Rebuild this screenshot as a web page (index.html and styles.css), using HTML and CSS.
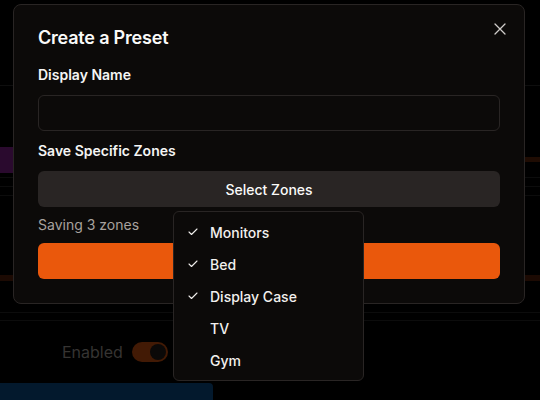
FILE: index.html
```html
<!DOCTYPE html>
<html>
<head>
<meta charset="utf-8">
<link rel="stylesheet" href="styles.css">
</head>
<body>
<div class="page">
  <div class="bg-head"></div>
  <div class="bg-spacer"></div>
  <div class="bg-row-purple">
    <div class="purple"></div>
    <div class="amber-tick"></div>
  </div>
  <div class="bg-line l1"></div>
  <div class="bg-line l2"></div>
  <div class="bg-line l3"></div>
  <div class="bg-gap2"></div>
  <div class="bg-amber-band"></div>
  <div class="bg-line l4"></div>
  <div class="bg-line l5"></div>
  <div class="enabled-row">
    <span class="enabled-label">Enabled</span>
    <span class="toggle"><span class="knob"></span></span>
  </div>
  <div class="blue-bar"></div>
</div>

<div class="modal">
  <button class="close" aria-label="Close">
    <svg width="12" height="12" viewBox="0 0 12 12"><path d="M1 1 11 11M11 1 1 11" stroke="#cfccc9" stroke-width="1.3" stroke-linecap="round" fill="none"/></svg>
  </button>
  <h2 class="title">Create a Preset</h2>
  <div class="label first">Display Name</div>
  <div class="input"></div>
  <div class="label">Save Specific Zones</div>
  <div class="select">
    Select Zones
    <div class="menu">
      <div class="item"><svg class="check" width="12" height="12" viewBox="0 0 24 24"><path d="M20 6 9 17l-5-5" stroke="#f0eeec" stroke-width="2.2" fill="none" stroke-linecap="round" stroke-linejoin="round"/></svg>Monitors</div>
      <div class="item"><svg class="check" width="12" height="12" viewBox="0 0 24 24"><path d="M20 6 9 17l-5-5" stroke="#f0eeec" stroke-width="2.2" fill="none" stroke-linecap="round" stroke-linejoin="round"/></svg>Bed</div>
      <div class="item"><svg class="check" width="12" height="12" viewBox="0 0 24 24"><path d="M20 6 9 17l-5-5" stroke="#f0eeec" stroke-width="2.2" fill="none" stroke-linecap="round" stroke-linejoin="round"/></svg>Display Case</div>
      <div class="item">TV</div>
      <div class="item">Gym</div>
    </div>
  </div>
  <div class="saving">Saving 3 zones</div>
  <div class="submit"></div>
</div>
</body>
</html>
```
FILE: styles.css
```css
* { box-sizing: border-box; }
html, body { margin: 0; padding: 0; }
body {
  width: 540px;
  height: 400px;
  overflow: hidden;
  background: #000;
  font-family: Inter, "Noto Sans", sans-serif;
  -webkit-font-smoothing: antialiased;
  position: relative;
}

/* background page (dimmed by backdrop) */
.page { display: flex; flex-direction: column; height: 400px; }
.bg-head { height: 86px; border-bottom: 1px solid #0e0e0e; flex: none; }
.bg-spacer { height: 61px; flex: none; }
.bg-row-purple { height: 26px; display: flex; flex: none; }
.purple { width: 200px; background: #2a0a2e; }
.amber-tick { margin-left: auto; width: 40px; height: 5px; margin-top: 10px; background: #1f0c03; }
.bg-line { flex: none; border-bottom: 1px solid #0c0c0c; }
.l1 { height: 5px; }
.l2 { height: 9px; }
.l3 { height: 9px; }
.bg-gap2 { height: 79px; flex: none; }
.bg-amber-band { height: 6px; background: #1c0a03; flex: none; }
.l4 { height: 32px; }
.l5 { height: 8px; }
.enabled-row {
  flex: none;
  margin-top: 21px;
  height: 20px;
  display: flex;
  align-items: center;
  padding-left: 62px;
  gap: 9px;
}
.enabled-label { font-size: 16px; color: #363432; line-height: 20px; }
.toggle {
  width: 36px; height: 20px; border-radius: 10px;
  background: #421a05;
  display: flex; align-items: center; justify-content: flex-end;
  padding-right: 2px;
}
.knob { width: 16px; height: 16px; border-radius: 50%; background: #0b0908; }
.blue-bar {
  flex: none;
  margin-top: 21px;
  width: 213px;
  height: 17px;
  background: #03192d;
  border-top-right-radius: 4px;
}

/* modal */
.modal {
  position: absolute;
  left: 13px;
  top: 4px;
  width: 512px;
  border: 1px solid #292524;
  border-radius: 8px;
  background: #0c0a09;
  padding: 24px;
}
.close {
  position: absolute;
  top: 18px;
  right: 18px;
  width: 12px; height: 12px;
  padding: 0; border: 0; background: none;
  display: block;
}
.close svg { display: block; }
.title {
  margin: 0;
  font-size: 18px;
  line-height: 18px;
  font-weight: 600;
  color: #fafaf9;
  letter-spacing: -0.2px;
}
.label {
  margin-top: 10px;
  font-size: 14px;
  line-height: 20px;
  font-weight: 600;
  color: #f5f5f4;
}
.label.first { margin-top: 18px; }
.input {
  margin-top: 10px;
  height: 36px;
  border: 1px solid #292524;
  border-radius: 6px;
}
.select {
  position: relative;
  margin-top: 10px;
  height: 36px;
  border-radius: 6px;
  background: #292524;
  color: #fafaf9;
  font-size: 14px;
  font-weight: 500;
  display: flex;
  align-items: center;
  justify-content: center;
}
.saving {
  margin-top: 8px;
  font-size: 14px;
  line-height: 20px;
  color: #a8a29e;
}
.submit {
  margin-top: 8px;
  height: 36px;
  border-radius: 6px;
  background: #ea580c;
}

/* dropdown */
.menu {
  position: absolute;
  z-index: 10;
  top: 40px;
  left: 135px;
  width: 191px;
  padding: 4px;
  background: #0c0a09;
  border: 1px solid #292524;
  border-radius: 6px;
}
.item {
  position: relative;
  height: 32px;
  padding-left: 32px;
  display: flex;
  align-items: center;
  font-size: 14px;
  font-weight: 500;
  color: #f2f0ee;
}
.check {
  position: absolute;
  left: 9px;
  top: 10px;
}
```
